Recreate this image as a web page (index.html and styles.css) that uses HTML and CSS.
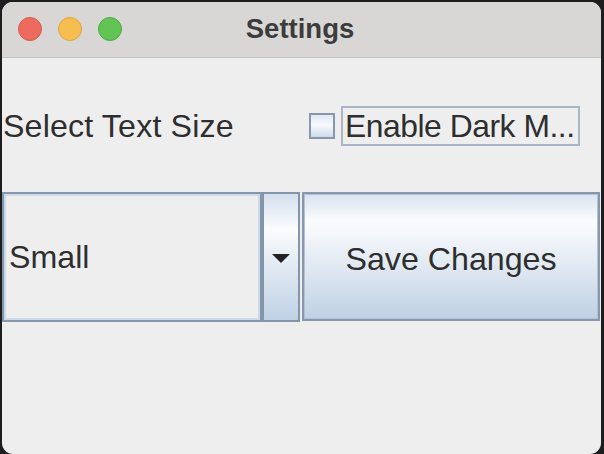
FILE: index.html
```html
<!DOCTYPE html>
<html lang="en">
<head>
<meta charset="utf-8">
<title>Settings</title>
<link rel="stylesheet" href="styles.css">
</head>
<body>
<div class="window">
  <div class="titlebar">
    <div class="lights">
      <span class="light red"></span>
      <span class="light yellow"></span>
      <span class="light green"></span>
    </div>
    <div class="title">Settings</div>
    <div></div>
  </div>
  <div class="content">
    <div class="row top">
      <div class="cell">
        <span class="label">Select Text Size</span>
      </div>
      <div class="cell check-cell">
        <span class="checkbox"></span>
        <span class="check-label">Enable Dark M...</span>
      </div>
    </div>
    <div class="row bottom">
      <div class="combo">
        <div class="combo-field">Small</div>
        <div class="combo-arrow"><span class="tri"></span></div>
      </div>
      <div class="button">Save Changes</div>
    </div>
  </div>
</div>
</body>
</html>
```

FILE: styles.css
```css
* { box-sizing: border-box; }
html, body { margin: 0; }
body {
  background: #1d1d1f;
  padding: 2px 3px 0 2px;
  height: 454px;
  overflow: hidden;
  font-family: "Liberation Sans", Arial, sans-serif;
}
.window {
  height: 452px;
  background: #eeeeee;
  border-radius: 11px;
  overflow: hidden;
}
.titlebar {
  height: 56px;
  background: #d8d7d6;
  border-bottom: 1px solid #c3c3c3;
  display: grid;
  grid-template-columns: 1fr auto 1fr;
  align-items: center;
}
.lights {
  display: flex;
  gap: 16px;
  padding-left: 16px;
  padding-bottom: 1px;
}
.light {
  width: 24px;
  height: 24px;
  border-radius: 50%;
  display: block;
}
.red { background: #ee6a5f; border: 1px solid #d65b50; }
.yellow { background: #f6be4f; border: 1px solid #dea63b; }
.green { background: #61c454; border: 1px solid #4eab42; }
.title {
  font-weight: bold;
  font-size: 27.5px;
  color: #3c3c3c;
  padding-bottom: 2px;
  padding-right: 3px;
}
.content {
  font-size: 32.2px;
  color: #2e2e2e;
}
.row {
  display: grid;
  grid-template-columns: 298px 298px;
  column-gap: 2px;
}
.row.top {
  height: 134px;
  padding-top: 2px;
  align-items: center;
}
.cell { display: flex; align-items: center; }
.label { padding-left: 1px; letter-spacing: 0.15px; }
.check-cell { padding-left: 7px; }
.checkbox {
  width: 26px;
  height: 26px;
  border: 2px solid #8797ac;
  background: linear-gradient(#dfe7f1, #f8fafd 45%, #cddbea);
  display: block;
  flex: none;
}
.check-label {
  margin-left: 6px;
  width: 239px;
  height: 40px;
  border: 2px solid #a9b6c8;
  display: flex;
  align-items: center;
  padding-left: 2px;
  white-space: nowrap;
  letter-spacing: -0.45px;
  font-size: 31.8px;
}
.row.bottom { height: 130px; }
.combo { display: flex; height: 130px; }
.combo-field {
  width: 260px;
  border: 2px solid #8797ab;
  box-shadow: inset 0 0 0 2px #cbd9e9;
  background: #eeeeee;
  display: flex;
  align-items: center;
  padding-left: 5px;
}
.combo-arrow {
  width: 38px;
  border: 2px solid #8494a9;
  background: linear-gradient(#d4dfed, #fbfcfe 28%, #dfe8f2 60%, #bfd1e4);
  display: flex;
  align-items: center;
  justify-content: center;
}
.tri {
  width: 0;
  height: 0;
  border-left: 9px solid transparent;
  border-right: 9px solid transparent;
  border-top: 9px solid #222222;
  margin-top: 2px;
}
.button {
  height: 129px;
  border: 2px solid #8798ae;
  box-shadow: inset 0 0 0 1px #b3c1d3;
  background: linear-gradient(#d9e3ef, #fbfcfe 22%, #e3eaf3 55%, #bfd1e4);
  display: flex;
  align-items: center;
  justify-content: center;
  padding-top: 5px;
}
```
